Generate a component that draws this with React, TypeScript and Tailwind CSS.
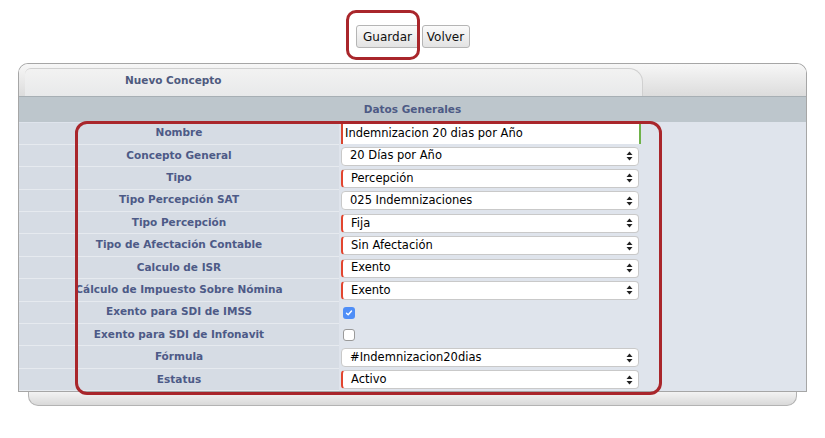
import { ReactNode } from "react";

type Row = {
  label: string;
  kind: "text" | "select" | "check";
  value?: string;
  required?: boolean;
  checked?: boolean;
};

const rows: Row[] = [
  { label: "Nombre", kind: "text", value: "Indemnizacion 20 dias por Año" },
  { label: "Concepto General", kind: "select", value: "20 Días por Año" },
  { label: "Tipo", kind: "select", value: "Percepción", required: true },
  { label: "Tipo Percepción SAT", kind: "select", value: "025 Indemnizaciones" },
  { label: "Tipo Percepción", kind: "select", value: "Fija", required: true },
  { label: "Tipo de Afectación Contable", kind: "select", value: "Sin Afectación", required: true },
  { label: "Calculo de ISR", kind: "select", value: "Exento", required: true },
  { label: "Cálculo de Impuesto Sobre Nómina", kind: "select", value: "Exento", required: true },
  { label: "Exento para SDI de IMSS", kind: "check", checked: true },
  { label: "Exento para SDI de Infonavit", kind: "check", checked: false },
  { label: "Fórmula", kind: "select", value: "#Indemnizacion20dias" },
  { label: "Estatus", kind: "select", value: "Activo", required: true },
];

const Arrows = () => (
  <svg width="7" height="10" viewBox="0 0 7 10" className="shrink-0">
    <path d="M3.5 0.5 L6.5 4 L0.5 4 Z" fill="#222" />
    <path d="M3.5 9.5 L6.5 6 L0.5 6 Z" fill="#222" />
  </svg>
);

const Field = ({ row }: { row: Row }): ReactNode => {
  if (row.kind === "text") {
    return (
      <div className="w-[300px] h-[20px] bg-white border-l-2 border-r-2 border-l-[#d9452f] border-r-[#6fb24a] flex items-center pl-[2px] text-[11.5px] text-black">
        {row.value}
      </div>
    );
  }
  if (row.kind === "check") {
    return row.checked ? (
      <div className="ml-[2px] w-[12px] h-[12px] rounded-[3px] bg-[#4f8ef7] flex items-center justify-center">
        <svg width="8" height="8" viewBox="0 0 8 8">
          <path d="M1.5 4.2 L3.2 5.8 L6.5 2" stroke="white" strokeWidth="1.4" fill="none" strokeLinecap="round" strokeLinejoin="round" />
        </svg>
      </div>
    ) : (
      <div className="ml-[2px] w-[12px] h-[12px] rounded-[3px] bg-white border border-[#9a9a9a]" />
    );
  }
  return (
    <div
      className={`w-[298px] h-[19px] bg-white rounded-[4px] border border-[#c9c9c9] flex items-center justify-between pl-[8px] pr-[5px] text-[11.5px] text-black ${
        row.required ? "border-l-2 border-l-[#e2452f]" : ""
      }`}
    >
      <span>{row.value}</span>
      <Arrows />
    </div>
  );
};

export default function App() {
  return (
    <div
      className="relative w-[825px] h-[438px] bg-white"
      style={{ fontFamily: '"DejaVu Sans", Verdana, sans-serif' }}
    >
      {/* botones */}
      <div className="flex justify-center gap-[2px] pt-[25px]">
        <button className="h-[23px] w-[64px] rounded-[3px] border border-[#b5b5b5] bg-gradient-to-b from-[#fbfbfb] to-[#e3e3e3] text-[12px] text-[#111]">
          Guardar
        </button>
        <button className="h-[23px] w-[48px] rounded-[3px] border border-[#b5b5b5] bg-gradient-to-b from-[#fbfbfb] to-[#e3e3e3] text-[12px] text-[#111]">
          Volver
        </button>
      </div>

      {/* panel */}
      <div className="mx-[18px] mt-[15px] w-[789px]">
        <div className="border border-[#a6a6a6] border-b-0 rounded-t-[10px] overflow-hidden">
          <div className="h-[33px] flex items-end bg-gradient-to-b from-[#f7f7f7] to-[#dcdcdc] border-b border-[#a7afb4]">
            <div className="ml-[6px] w-[618px] h-[28px] rounded-tr-[14px] rounded-tl-[6px] border-t border-r border-[#d0d0d0] bg-gradient-to-b from-[#f2f2f2] to-[#e8e9ea] flex items-start pt-[4px] pl-[100px] text-[10.5px] font-bold text-[#4e5a7e]">
              Nuevo Concepto
            </div>
          </div>
          <div className="h-[25px] bg-[#bdc6cc] flex items-center justify-center text-[10.5px] font-bold text-[#4d5a85]">
            Datos Generales
          </div>
          <div className="bg-[#dfe4ec] pt-[0.5px]">
            {rows.map((row) => (
              <div key={row.label} className="flex h-[22.4px]">
                <div className="w-[320px] shrink-0 bg-[#d6dce4] border-b border-[#e6eaef] flex items-center justify-center text-[10.5px] font-bold text-[#4d5a87]">
                  {row.label}
                </div>
                <div className="flex-1 flex items-center pl-[2px]">
                  <Field row={row} />
                </div>
              </div>
            ))}
          </div>
        </div>
        <div className="border-t border-[#a6a6a6]" />
        <div className="mx-[10px] h-[14px] rounded-b-[10px] border border-t-0 border-[#b3b3b3] bg-gradient-to-b from-[#f3f3f3] to-[#d9d9d9]" />
      </div>

      {/* marcas */}
      <div className="absolute left-[346px] top-[10px] w-[74px] h-[50px] rounded-[10px] border-[3px] border-[#a9262b]" />
      <div className="absolute left-[75px] top-[121px] w-[587px] h-[274px] rounded-[12px] border-[3px] border-[#a9262b]" />
    </div>
  );
}
